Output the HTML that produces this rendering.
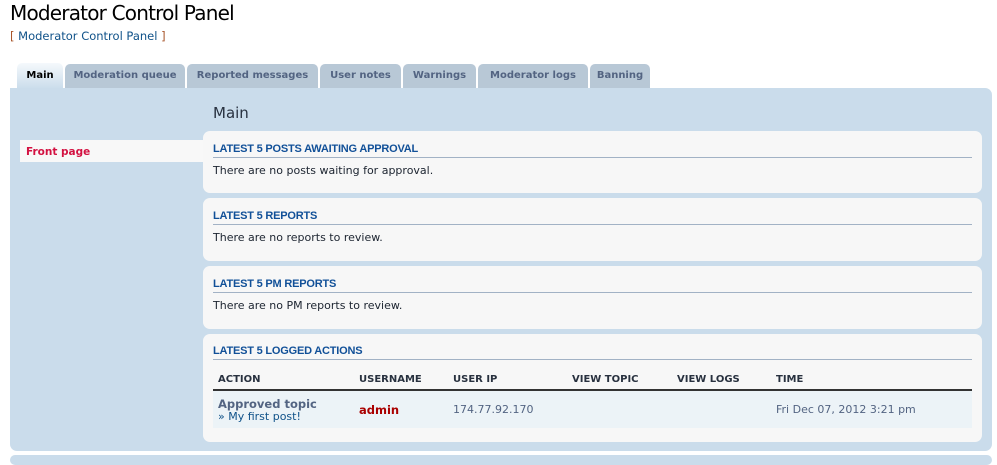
<!DOCTYPE html>
<html><head><style>
*{margin:0;padding:0;box-sizing:border-box}
body{width:997px;height:459px;background:#fff;font-family:"DejaVu Sans",Verdana,sans-serif;font-size:11px;color:#28313f;position:relative;overflow:hidden}
.a{position:absolute}
h1{position:absolute;left:10px;top:1px;font:normal 20px "DejaVu Sans",sans-serif;color:#000;letter-spacing:-0.8px}
.bc{left:10px;top:29px;font-size:11.5px;color:#105289}
.bc span{color:#a9562b}
.tab{position:absolute;top:64px;height:24px;background:#b8c8d6;border-radius:5px 5px 0 0;font-weight:bold;font-size:10px;color:#536482;text-align:center;line-height:24px;white-space:nowrap}
.tab.on{background:linear-gradient(#f5f9fc,#cadceb);color:#000;top:63px;height:26px;line-height:25px}
.panel{left:10px;top:88px;width:982px;height:363px;background:#cadceb;border-radius:0 7px 7px 7px}
.strip{left:10px;top:455px;width:982px;height:10px;background:#cadceb;border-radius:7px}
.box{position:absolute;left:203px;width:779px;background:#f7f7f7;border-radius:7px}
.h3{position:absolute;left:10px;right:10px;top:10px;height:17px;border-bottom:1px solid #a2b2c5;font:bold 11px "Liberation Sans",Arial,sans-serif;color:#115098;letter-spacing:-0.2px;padding-top:2px}
.p{position:absolute;left:10px;top:33px;color:#1c2430}
</style></head><body>
<h1>Moderator Control Panel</h1>
<div class="a bc"><span>[</span> Moderator Control Panel <span>]</span></div>
<div class="tab on" style="left:17px;width:46px">Main</div>
<div class="tab" style="left:65px;width:120px">Moderation queue</div>
<div class="tab" style="left:187px;width:131px">Reported messages</div>
<div class="tab" style="left:320px;width:81px">User notes</div>
<div class="tab" style="left:403px;width:73px">Warnings</div>
<div class="tab" style="left:478px;width:110px">Moderator logs</div>
<div class="tab" style="left:590px;width:60px">Banning</div>
<div class="a panel"></div>
<div class="a strip"></div>
<div class="a" style="left:213px;top:104px;font-size:15px;color:#28313f">Main</div>
<div class="a" style="left:20px;top:140px;width:183px;height:22px;background:#f8f8f8;color:#d31141;font-weight:bold;font-size:10.5px;line-height:24px;padding-left:6px">Front page</div>
<div class="box" style="top:131px;height:62px"><div class="h3">LATEST 5 POSTS AWAITING APPROVAL</div><div class="p">There are no posts waiting for approval.</div></div>
<div class="box" style="top:198px;height:63px"><div class="h3">LATEST 5 REPORTS</div><div class="p">There are no reports to review.</div></div>
<div class="box" style="top:266px;height:63px"><div class="h3">LATEST 5 PM REPORTS</div><div class="p">There are no PM reports to review.</div></div>
<div class="box" style="top:334px;height:108px"><div class="h3" style="top:9px">LATEST 5 LOGGED ACTIONS</div></div>
<div class="a" style="left:218px;top:374px;font:bold 10px 'DejaVu Sans',sans-serif">ACTION</div>
<div class="a" style="left:359px;top:374px;font:bold 10px 'DejaVu Sans',sans-serif">USERNAME</div>
<div class="a" style="left:453px;top:374px;font:bold 10px 'DejaVu Sans',sans-serif">USER IP</div>
<div class="a" style="left:572px;top:374px;font:bold 10px 'DejaVu Sans',sans-serif">VIEW TOPIC</div>
<div class="a" style="left:677px;top:374px;font:bold 10px 'DejaVu Sans',sans-serif">VIEW LOGS</div>
<div class="a" style="left:776px;top:374px;font:bold 10px 'DejaVu Sans',sans-serif">TIME</div>
<div class="a" style="left:213px;top:389px;width:759px;height:2px;background:#333"></div>
<div class="a" style="left:213px;top:391px;width:759px;height:37px;background:#ecf3f7"></div>
<div class="a" style="left:218px;top:397px;font-weight:bold;font-size:11.5px;color:#536482">Approved topic</div>
<div class="a" style="left:218px;top:410px;font-size:11px;color:#105289">» My first post!</div>
<div class="a" style="left:359px;top:403px;font-weight:bold;font-size:11.5px;color:#aa0000">admin</div>
<div class="a" style="left:453px;top:403px;font-size:11px;color:#536482">174.77.92.170</div>
<div class="a" style="left:776px;top:403px;font-size:11px;color:#536482">Fri Dec 07, 2012 3:21 pm</div>
</body></html>
